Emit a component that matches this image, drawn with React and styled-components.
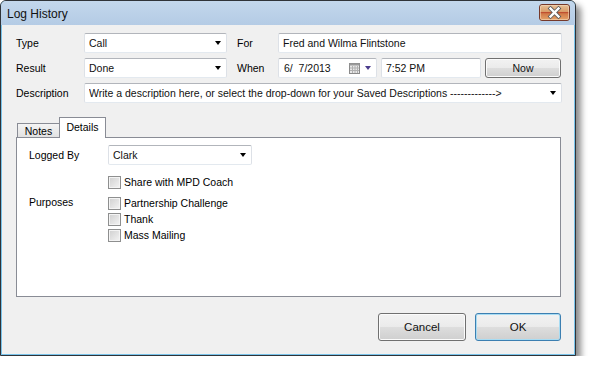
import React from "react";
import styled, { createGlobalStyle } from "styled-components";

const GlobalStyle = createGlobalStyle`
  html, body { margin: 0; padding: 0; background: #ffffff; }
  body { font-family: "Liberation Sans", Arial, sans-serif; font-size: 10.5px; color: #000; }
  * { box-sizing: border-box; }
`;

const Window = styled.div`
  width: 576px;
  height: 356px;
  border: 1px solid #2f3338;
  border-radius: 6px 6px 0 0;
  background: #79c3ea;
  padding: 0 1px 1px 1px;
  box-shadow: 5px 5px 6px rgba(0, 0, 0, 0.45);
  display: flex;
  flex-direction: column;
  overflow: hidden;
`;

const TitleBar = styled.div`
  height: 24px;
  margin: 0 -1px;
  background: linear-gradient(#c3d7ec, #b4cbe5);
  display: flex;
  align-items: center;
  justify-content: space-between;
  padding: 0 5px 0 6px;
`;

const Title = styled.span`
  font-size: 12px;
  color: #111;
  padding-top: 2px;
`;

const CloseBtn = styled.div`
  width: 31px;
  height: 17px;
  margin-top: -2px;
  display: flex;
`;

const Body = styled.div`
  flex: 1;
  background: #f0f0f0;
  padding: 8px 0 0 14px;
  display: flex;
  flex-direction: column;
`;

const FormGrid = styled.div`
  display: grid;
  width: 546px;
  grid-template-columns: 68px 143px 51px 284px;
  grid-auto-rows: 20px;
  row-gap: 5px;
  align-items: center;
`;

const Label = styled.span`
  padding-left: ${(p) => p.$indent || 0}px;
  white-space: nowrap;
`;

const Field = styled.div`
  height: 20px;
  width: ${(p) => (p.$w ? `${p.$w}px` : "auto")};
  grid-column: ${(p) => p.$span || "auto"};
  background: #fff;
  border: 1px solid;
  border-color: #b2b5bb #dde1e7 #e3e9ef #dde1e7;
  border-radius: 2px;
  display: flex;
  align-items: center;
  padding: 0 5px 0 ${(p) => p.$pl ?? 4}px;
  white-space: pre;
  overflow: hidden;
  color: #111;
`;

const FieldText = styled.span`
  flex: 1;
  overflow: hidden;
`;

const Arrow = styled.span`
  width: 0;
  height: 0;
  border-left: 3.5px solid transparent;
  border-right: 3.5px solid transparent;
  border-top: 4px solid ${(p) => p.$color || "#000"};
  margin-left: 4px;
  flex: none;
`;

const WhenRow = styled.div`
  display: flex;
  gap: 4px;
  height: 20px;
`;

const Button = styled.button`
  font-family: inherit;
  font-size: ${(p) => (p.$big ? "11.5px" : "10.5px")};
  color: #111;
  width: ${(p) => p.$w}px;
  height: ${(p) => p.$h || 20}px;
  border: 1px solid ${(p) => (p.$focus ? "#3c7fb1" : "#707070")};
  border-radius: 3px;
  padding: 0;
  background: linear-gradient(#f2f2f2 0%, #ebebeb 48%, #dddddd 52%, #cfcfcf 100%);
  box-shadow: inset 0 0 0 1px ${(p) => (p.$focus ? "#a8dcf3" : "#fbfbfb")};
  display: flex;
  align-items: center;
  justify-content: center;
`;

const Tabs = styled.div`
  margin-top: 14px;
  display: flex;
  flex-direction: column;
`;

const TabStrip = styled.div`
  display: flex;
  align-items: flex-end;
  height: 21px;
  padding-left: 1px;
  position: relative;
  z-index: 1;
`;

const Tab = styled.div`
  height: ${(p) => (p.$active ? 21 : 15)}px;
  width: ${(p) => (p.$active ? 47 : 43)}px;
  border: 1px solid #898c95;
  border-bottom: ${(p) => (p.$active ? "none" : "1px solid #898c95")};
  margin-left: ${(p) => (p.$active ? -1 : 0)}px;
  background: ${(p) => (p.$active ? "#ffffff" : "linear-gradient(#f4f4f4, #e2e2e2)")};
  display: flex;
  justify-content: center;
  padding-top: ${(p) => (p.$active ? 3 : 1)}px;
  font-size: 10.5px;
`;

const Panel = styled.div`
  width: 545px;
  height: 160px;
  margin-top: -1px;
  background: #fff;
  border: 1px solid #898c95;
  padding: 7px 0 0 12px;
  display: grid;
  grid-template-columns: 79px 1fr;
  align-items: start;
  align-content: start;
`;

const PanelLabel = styled.span`
  align-self: center;
`;

const PurposesLabel = styled.span`
  padding-top: 6px;
`;

const CheckList = styled.div`
  display: flex;
  flex-direction: column;
  margin-top: ${(p) => p.$mt || 0}px;
`;

const CheckRow = styled.label`
  height: 16px;
  display: flex;
  align-items: center;
  gap: 3px;
`;

const Box = styled.span`
  width: 13px;
  height: 13px;
  border: 1px solid #8e8f8f;
  background: linear-gradient(135deg, #cfcfcf, #f4f4f4);
  box-shadow: inset 0 0 0 1px #f4f4f4;
  flex: none;
`;

const Footer = styled.div`
  width: 545px;
  display: flex;
  justify-content: flex-end;
  gap: 9px;
  margin-top: 16px;
`;

const CloseIcon = () => (
  <svg width="31" height="17" viewBox="0 0 31 17">
    <defs>
      <linearGradient id="cg" x1="0" y1="0" x2="0" y2="1">
        <stop offset="0" stopColor="#e9c39a" />
        <stop offset="0.45" stopColor="#d99c68" />
        <stop offset="0.5" stopColor="#bf4f30" />
        <stop offset="0.58" stopColor="#d27a48" />
        <stop offset="1" stopColor="#e6a66b" />
      </linearGradient>
    </defs>
    <rect x="0.5" y="0.5" width="30" height="16" rx="2.5" fill="url(#cg)" stroke="#76392a" />
    <rect x="1.5" y="1.5" width="28" height="14" rx="1.5" fill="none" stroke="#f3d9bd" strokeOpacity="0.6" />
    <path d="M11.5 4.5 L19.5 12.5 M19.5 4.5 L11.5 12.5" stroke="#5a5a5a" strokeWidth="4" strokeLinecap="square" />
    <path d="M11.5 4.5 L19.5 12.5 M19.5 4.5 L11.5 12.5" stroke="#ffffff" strokeWidth="2.4" strokeLinecap="square" />
  </svg>
);

const CalendarIcon = () => (
  <svg width="12" height="11" viewBox="0 0 12 11" style={{ flex: "none" }}>
    <rect x="0.5" y="0.5" width="10" height="10" fill="#e8e8e8" stroke="#8a8a8a" />
    <rect x="0.5" y="0.5" width="10" height="2" fill="#9a9a9a" />
    <path d="M3.5 3 V10 M6 3 V10 M8.5 3 V10 M1 5 H10 M1 7.5 H10" stroke="#b0b0b0" strokeWidth="1" />
  </svg>
);

const Check = ({ children }) => (
  <CheckRow>
    <Box />
    <span>{children}</span>
  </CheckRow>
);

export default function App() {
  return (
    <>
      <GlobalStyle />
      <Window>
        <TitleBar>
          <Title>Log History</Title>
          <CloseBtn>
            <CloseIcon />
          </CloseBtn>
        </TitleBar>
        <Body>
          <FormGrid>
            <Label>Type</Label>
            <Field>
              <FieldText>Call</FieldText>
              <Arrow />
            </Field>
            <Label $indent={10}>For</Label>
            <Field>
              <FieldText>Fred and Wilma Flintstone</FieldText>
            </Field>

            <Label>Result</Label>
            <Field>
              <FieldText>Done</FieldText>
              <Arrow />
            </Field>
            <Label $indent={10}>When</Label>
            <WhenRow>
              <Field $w={99} $pl={5}>
                <FieldText>{"6/  7/2013"}</FieldText>
                <CalendarIcon />
                <Arrow $color="#4b3c8c" />
              </Field>
              <Field $w={100}>
                <FieldText>7:52 PM</FieldText>
              </Field>
              <Button $w={76}>Now</Button>
            </WhenRow>

            <Label>Description</Label>
            <Field $span="2 / 5">
              <FieldText>
                Write a description here, or select the drop-down for your Saved Descriptions -------------&gt;
              </FieldText>
              <Arrow />
            </Field>
          </FormGrid>

          <Tabs>
            <TabStrip>
              <Tab>Notes</Tab>
              <Tab $active>Details</Tab>
            </TabStrip>
            <Panel>
              <PanelLabel>Logged By</PanelLabel>
              <Field $w={144}>
                <FieldText>Clark</FieldText>
                <Arrow />
              </Field>
              <span />
              <CheckList $mt={9}>
                <Check>Share with MPD Coach</Check>
              </CheckList>
              <PurposesLabel>Purposes</PurposesLabel>
              <CheckList $mt={5}>
                <Check>Partnership Challenge</Check>
                <Check>Thank</Check>
                <Check>Mass Mailing</Check>
              </CheckList>
            </Panel>
          </Tabs>

          <Footer>
            <Button $w={88} $h={28} $big>Cancel</Button>
            <Button $w={86} $h={28} $big $focus>OK</Button>
          </Footer>
        </Body>
      </Window>
    </>
  );
}
